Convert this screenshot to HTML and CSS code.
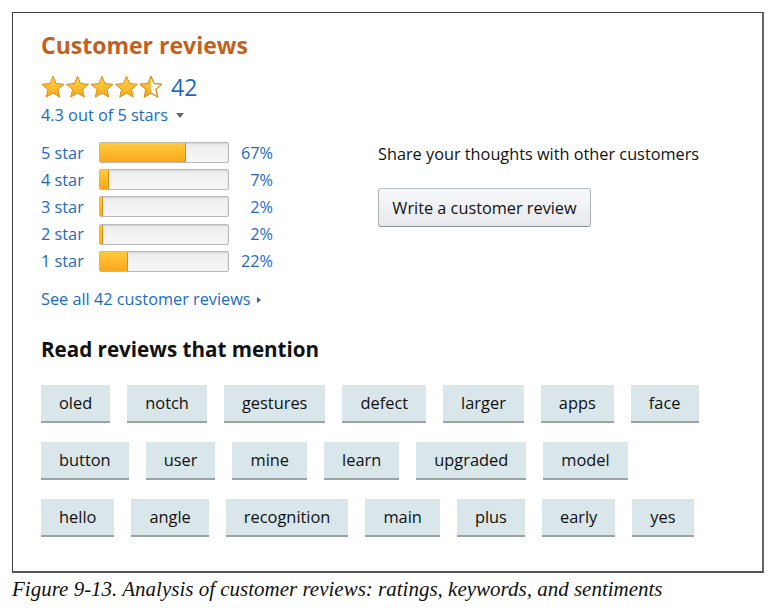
FILE: index.html
```html
<!DOCTYPE html>
<html>
<head>
<meta charset="utf-8">
<link rel="stylesheet" href="styles.css">
</head>
<body>
<svg class="defs" width="0" height="0" aria-hidden="true">
  <defs>
    <linearGradient id="gold" x1="0" y1="0" x2="0" y2="1">
      <stop offset="0" stop-color="#ffd84a"/>
      <stop offset="1" stop-color="#f9a81a"/>
    </linearGradient>
    <clipPath id="lefthalf"><rect x="0" y="0" width="12" height="24"/></clipPath>
    <path id="star" d="M12 1.3 L15.06 8.59 L22.94 9.25 L16.95 14.41 L18.76 22.1 L12 18 L5.24 22.1 L7.05 14.41 L1.06 9.25 L8.94 8.59 Z"/>
  </defs>
</svg>
<div class="figure">
  <div class="content">
    <div class="top">
      <div class="left">
        <h2 class="title">Customer reviews</h2>
        <div class="rating">
          <svg class="stars" width="124" height="24" viewBox="0 0 124 24">
            <use href="#star" x="0" fill="url(#gold)" stroke="#e08a12" stroke-width="1"/>
            <use href="#star" x="24.5" fill="url(#gold)" stroke="#e08a12" stroke-width="1"/>
            <use href="#star" x="49" fill="url(#gold)" stroke="#e08a12" stroke-width="1"/>
            <use href="#star" x="73.5" fill="url(#gold)" stroke="#e08a12" stroke-width="1"/>
            <g transform="translate(98 0)">
              <use href="#star" fill="#fff" stroke="#e08a12" stroke-width="1"/>
              <use href="#star" fill="url(#gold)" clip-path="url(#lefthalf)"/>
              <use href="#star" fill="none" stroke="#e08a12" stroke-width="1"/>
            </g>
          </svg>
          <span class="count">42</span>
        </div>
        <div class="avg">4.3 out of 5 stars <span class="caret"></span></div>
        <div class="hist">
          <span class="lbl">5 star</span><span class="bar"><span class="fill" style="width:67%"></span></span><span class="pct">67%</span>
          <span class="lbl">4 star</span><span class="bar"><span class="fill" style="width:7%"></span></span><span class="pct">7%</span>
          <span class="lbl">3 star</span><span class="bar"><span class="fill" style="width:2%"></span></span><span class="pct">2%</span>
          <span class="lbl">2 star</span><span class="bar"><span class="fill" style="width:2%"></span></span><span class="pct">2%</span>
          <span class="lbl">1 star</span><span class="bar"><span class="fill" style="width:22%"></span></span><span class="pct">22%</span>
        </div>
        <div class="seeall">See all 42 customer reviews <span class="rcaret"></span></div>
      </div>
      <div class="right">
        <div class="share">Share your thoughts with other customers</div>
        <button class="btn">Write a customer review</button>
      </div>
    </div>
    <h3 class="mention">Read reviews that mention</h3>
    <div class="chips">
      <div class="row">
        <span class="chip">oled</span><span class="chip">notch</span><span class="chip">gestures</span><span class="chip">defect</span><span class="chip">larger</span><span class="chip">apps</span><span class="chip">face</span>
      </div>
      <div class="row">
        <span class="chip">button</span><span class="chip">user</span><span class="chip">mine</span><span class="chip">learn</span><span class="chip">upgraded</span><span class="chip">model</span>
      </div>
      <div class="row">
        <span class="chip">hello</span><span class="chip">angle</span><span class="chip">recognition</span><span class="chip">main</span><span class="chip">plus</span><span class="chip">early</span><span class="chip">yes</span>
      </div>
    </div>
  </div>
</div>
<p class="caption">Figure 9-13. Analysis of customer reviews: ratings, keywords, and sentiments</p>
</body>
</html>
```

FILE: styles.css
```css
html, body {
  margin: 0;
  padding: 0;
  background: #fff;
}
body {
  width: 776px;
  height: 615px;
  overflow: hidden;
  font-family: "Open Sans", "Liberation Sans", sans-serif;
  color: #111;
}
.defs {
  position: absolute;
  width: 0;
  height: 0;
}
.figure {
  margin: 12px 0 0 12px;
  width: 749px;
  height: 558px;
  border: 1px solid #444;
  border-right: 2px solid #666;
  border-bottom: 2px solid #555;
}
.content {
  padding: 19px 0 0 28px;
}
.top {
  display: flex;
}
.left {
  width: 337px;
}
.title {
  margin: 0;
  font-size: 23px;
  font-weight: 700;
  color: #c45f1c;
  line-height: 26px;
}
.rating {
  display: flex;
  align-items: center;
  margin-top: 16px;
  height: 26px;
}
.stars {
  display: block;
}
.count {
  margin-left: 6px;
  font-size: 23px;
  color: #1c6bc2;
  line-height: 26px;
}
.avg {
  margin-top: 4px;
  font-size: 16.3px;
  color: #1c6bc2;
  line-height: 22px;
}
.caret {
  display: inline-block;
  width: 0;
  height: 0;
  margin-left: 4px;
  vertical-align: 3px;
  border-left: 4px solid transparent;
  border-right: 4px solid transparent;
  border-top: 5px solid #666;
}
.hist {
  margin-top: 13px;
  display: grid;
  grid-template-columns: 58px 130px 44px;
  grid-auto-rows: 27.2px;
  align-items: center;
}
.lbl {
  font-size: 16.3px;
  color: #1c6bc2;
}
.pct {
  font-size: 16.3px;
  color: #1c6bc2;
  text-align: right;
}
.bar {
  display: block;
  height: 21px;
  box-sizing: border-box;
  border: 1px solid #b9b9b9;
  border-radius: 2px;
  background: linear-gradient(#eeeeee, #f6f6f6);
  box-shadow: inset 0 1px 2px rgba(0,0,0,0.12);
  overflow: hidden;
}
.fill {
  display: block;
  height: 100%;
  min-width: 3px;
  box-sizing: border-box;
  background: linear-gradient(#ffcb3c, #fca61a);
  border-right: 1px solid #d8900f;
}
.seeall {
  margin-top: 13px;
  font-size: 16.3px;
  color: #1c6bc2;
  line-height: 22px;
}
.rcaret {
  display: inline-block;
  width: 0;
  height: 0;
  margin-left: 2px;
  vertical-align: 2px;
  border-top: 3.5px solid transparent;
  border-bottom: 3.5px solid transparent;
  border-left: 4px solid #1c6bc2;
}
.right {
  padding-top: 111px;
}
.share {
  font-size: 16.3px;
  line-height: 22px;
  color: #111;
}
.btn {
  display: block;
  margin-top: 23px;
  height: 39px;
  width: 213px;
  padding: 0;
  font-family: inherit;
  font-size: 16.3px;
  color: #111;
  border: 1px solid #adb1b8;
  border-top-color: #b9bdc3;
  border-bottom-color: #8d9096;
  border-radius: 3px;
  background: linear-gradient(#f7f8fa, #e7e9ec);
}
.mention {
  margin: 26px 0 0;
  font-size: 20.6px;
  font-weight: 700;
  line-height: 26px;
  color: #111;
}
.chips {
  margin-top: 23px;
  display: flex;
  flex-direction: column;
  gap: 19px;
}
.row {
  display: flex;
  gap: 17px;
}
.chip {
  display: flex;
  align-items: center;
  height: 38px;
  box-sizing: border-box;
  padding: 0 18px;
  background: #d9e7ea;
  border-bottom: 2px solid #9aa3a5;
  font-size: 16.4px;
  color: #111;
}
.caption {
  margin: 4px 0 0 12px;
  font-family: "Liberation Serif", serif;
  font-style: italic;
  font-size: 21px;
  color: #111;
}
```
